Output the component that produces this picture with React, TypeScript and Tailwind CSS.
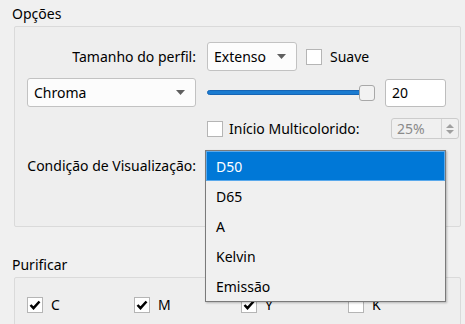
import React from "react";

const font = { fontFamily: '"Noto Sans", "Open Sans", sans-serif' };

function Arrow() {
  return (
    <svg width="9" height="5" viewBox="0 0 9 5" className="block">
      <path d="M0 0 L9 0 L4.5 5 Z" fill="#5f5f5f" />
    </svg>
  );
}

function Combo({ text, className }: { text: string; className: string }) {
  return (
    <div
      className={
        "flex items-center justify-between pl-[6px] pr-[10px] border border-[#c2c2c2] rounded-[3px] bg-[#fcfcfc] " +
        className
      }
    >
      <span>{text}</span>
      <Arrow />
    </div>
  );
}

function Check({ checked }: { checked?: boolean }) {
  return (
    <div className="w-[16px] h-[16px] shrink-0 border border-[#b5b5b5] bg-white flex items-center justify-center">
      {checked && (
        <svg width="12" height="10" viewBox="0 0 12 10">
          <path d="M1.5 5 L4.5 8.2 L10.5 1.5" fill="none" stroke="#000" strokeWidth="2.5" />
        </svg>
      )}
    </div>
  );
}

export default function App() {
  return (
    <div
      className="relative w-[465px] h-[324px] overflow-hidden bg-[#f0f0f0] text-[14px] text-black"
      style={font}
    >
      <div className="pl-[12px] mt-[4px] leading-[20px]">Opções</div>
      <div className="ml-[14px] mt-[2px] w-[447px] h-[201px] border border-[#dadada] rounded-[2px] bg-[#eeeeee] pt-[15px] pl-[12px]">
        {/* Row 1 */}
        <div className="flex items-center h-[29px]">
          <div className="w-[170px] text-right pr-[1px]">Tamanho do perfil:</div>
          <Combo text="Extenso" className="ml-[10px] w-[90px] h-[29px]" />
          <div className="ml-[9px]">
            <Check />
          </div>
          <span className="ml-[8px]">Suave</span>
        </div>
        {/* Row 2 */}
        <div className="flex items-center h-[29px] mt-[7px]">
          <Combo text="Chroma" className="w-[169px] h-[29px]" />
          <div className="ml-[11px] w-[168px] h-[16px] relative flex items-center">
            <div className="w-[160px] h-[5px] rounded-full bg-[#1a7bd0] border border-[#1665b5]" />
            <div className="absolute right-0 top-[0px] w-[16px] h-[16px] rounded-[3px] border border-[#a8a8a8] bg-[#f2f2f2]" />
          </div>
          <div className="ml-[10px] w-[61px] h-[28px] border border-[#bdbdbd] rounded-[3px] bg-white flex items-center pl-[6px]">
            20
          </div>
        </div>
        {/* Row 3 */}
        <div className="flex items-center h-[21px] mt-[11px]">
          <div className="w-[180px] shrink-0" />
          <Check />
          <span className="ml-[6px]">Início Multicolorido:</span>
          <div className="ml-auto mr-[1px] w-[68px] h-[21px] border border-[#cccccc] rounded-[3px] bg-[#f0f0f0] flex items-center text-[#8a8a8a]">
            <span className="pl-[5px] flex-1">25%</span>
            <div className="w-[17px] h-full border-l border-[#d4d4d4] flex flex-col items-center justify-center gap-[2px]">
              <svg width="8" height="4" viewBox="0 0 8 4">
                <path d="M0 4 L8 4 L4 0 Z" fill="#a0a0a0" />
              </svg>
              <svg width="8" height="4" viewBox="0 0 8 4">
                <path d="M0 0 L8 0 L4 4 Z" fill="#a0a0a0" />
              </svg>
            </div>
          </div>
        </div>
        {/* Row 4 */}
        <div className="flex items-center h-[29px] mt-[12px]">
          <div className="w-[170px] text-right pr-[1px]">Condição de Visualização:</div>
          <Combo text="" className="ml-[10px] w-[239px] h-[29px]" />
        </div>
      </div>

      <div className="pl-[12px] mt-[28px] leading-[20px]">Purificar</div>
      <div className="ml-[14px] mt-[2px] w-[447px] h-[100px] border border-[#dadada] rounded-[2px] bg-[#eeeeee] pt-[19px] pl-[12px]">
        <div className="grid grid-cols-[107px_107px_107px_107px] h-[16px]">
          {[
            ["C", true],
            ["M", true],
            ["Y", true],
            ["K", false],
          ].map(([l, c]) => (
            <div key={l as string} className="flex items-center h-[16px]">
              <Check checked={c as boolean} />
              <span className="ml-[8px] leading-[16px]">{l as string}</span>
            </div>
          ))}
        </div>
      </div>

      {/* Dropdown popup */}
      <div className="absolute left-[205px] top-[150px] w-[241px] h-[152px] border border-[#7a7a7a] bg-[#f0f0f0] shadow-[1px_1px_2px_rgba(0,0,0,0.25)]">
        <div className="h-[30px] bg-[#0078d7] border border-[#5aa9ec] text-white flex items-center pl-[9px]">
          D50
        </div>
        {["D65", "A", "Kelvin", "Emissão"].map((t) => (
          <div key={t} className="h-[30px] flex items-center pl-[10px]">
            {t}
          </div>
        ))}
      </div>
    </div>
  );
}
